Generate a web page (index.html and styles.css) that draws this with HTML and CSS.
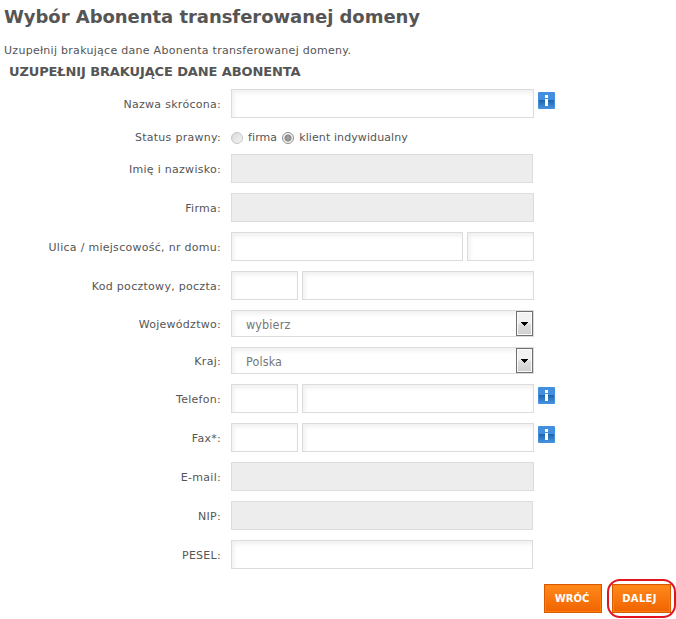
FILE: index.html
```html
<!DOCTYPE html>
<html lang="pl">
<head>
<meta charset="utf-8">
<title>Wybór Abonenta transferowanej domeny</title>
<link rel="stylesheet" href="styles.css">
</head>
<body>
<svg class="defs" width="0" height="0">
  <defs>
    <linearGradient id="blue" x1="0" y1="0" x2="0" y2="1"><stop offset="0" stop-color="#1f64a8"/><stop offset="1" stop-color="#4490df"/></linearGradient>
    <symbol id="info" viewBox="0 0 17 17">
      <rect width="17" height="17" rx="1" fill="#438fdf"/>
      <rect x="1" y="8" width="15" height="8" fill="url(#blue)"/>
      <path d="M7 3h3v3H7zM7 7h3v7H7z" fill="#fff"/>
    </symbol>
  </defs>
</svg>
<h1>Wybór Abonenta transferowanej domeny</h1>
<p class="intro">Uzupełnij brakujące dane Abonenta transferowanej domeny.</p>
<h2>UZUPEŁNIJ BRAKUJĄCE DANE ABONENTA</h2>
<form>
  <div class="row"><label>Nazwa skrócona:</label><input class="full"><svg class="info"><use href="#info"/></svg></div>
  <div class="row status"><label>Status prawny:</label><i class="radio"></i><span class="option">firma</span><i class="radio checked"></i><span class="option">klient indywidualny</span></div>
  <div class="row"><label>Imię i nazwisko:</label><input class="short" disabled></div>
  <div class="row"><label>Firma:</label><input class="full" disabled></div>
  <div class="row"><label>Ulica / miejscowość, nr domu:</label><input class="medium"><input class="small"></div>
  <div class="row"><label>Kod pocztowy, poczta:</label><input class="small"><input class="medium"></div>
  <div class="row pick"><label>Województwo:</label><div class="select"><span>wybierz</span><b><svg width="7" height="4"><path d="M0 0h7v1H6v1H5v1H4v1H3V3H2V2H1V1H0z"/></svg></b></div></div>
  <div class="row pick"><label>Kraj:</label><div class="select"><span>Polska</span><b><svg width="7" height="4"><path d="M0 0h7v1H6v1H5v1H4v1H3V3H2V2H1V1H0z"/></svg></b></div></div>
  <div class="row"><label>Telefon:</label><input class="small"><input class="medium"><svg class="info"><use href="#info"/></svg></div>
  <div class="row"><label>Fax*:</label><input class="small"><input class="medium"><svg class="info"><use href="#info"/></svg></div>
  <div class="row"><label>E-mail:</label><input class="full" disabled></div>
  <div class="row"><label>NIP:</label><input class="short" disabled></div>
  <div class="row"><label>PESEL:</label><input class="short"></div>
  <div class="actions"><button type="button">WRÓĆ</button><div class="ring"><button type="button">DALEJ</button></div></div>
</form>
</body>
</html>
```
FILE: styles.css
```css
* { box-sizing: border-box; }
body {
  margin: 0;
  width: 676px;
  height: 619px;
  overflow: hidden;
  background: #fff;
  color: #555;
  font: 11px/14px Verdana, "DejaVu Sans", sans-serif;
  letter-spacing: 0.28px;
}
.defs { display: block; }
h1 { margin: 0; padding: 5px 0 0 4px; height: 43px; font-size: 18px; line-height: 24px; letter-spacing: -0.04px; white-space: nowrap; }
.intro { margin: 0; padding: 1px 0 0 4px; height: 21px; }
h2 { margin: 0; padding: 0 0 0 9px; height: 25px; font-size: 13px; line-height: 15px; letter-spacing: -0.12px; white-space: nowrap; }
form { display: flex; flex-direction: column; gap: 10px; }
.row { display: flex; align-items: flex-start; height: 29px; }
.row label { width: 221px; margin-right: 10px; line-height: 32px; text-align: right; white-space: nowrap; }
input {
  height: 29px;
  margin: 0 4px 0 0;
  padding: 0 8px;
  border: 1px solid #dcdcdc;
  border-radius: 0;
  background: #fff;
  box-shadow: inset 2px 3px 4px #f0f0f0;
  outline: none;
}
input:disabled { background: #ededed; box-shadow: none; }
.full { width: 303px; }
.short { width: 302px; }
.medium { width: 232px; }
.small { width: 67px; }
.info { display: block; width: 17px; height: 17px; margin-top: 3px; }
.status { height: 16px; padding-top: 3px; align-items: center; }
.status label { line-height: 16px; }
.option { letter-spacing: 0.1px; }
.radio { width: 12px; height: 12px; margin-right: 5px; border: 1px solid #c5c5c5; border-radius: 50%; background: linear-gradient(135deg, #d9d9d9, #f5f5f5); }
.radio.checked { margin-left: 5px; border-color: #909090; background: radial-gradient(circle, #aaa 0, #888 3px, #f2f2f2 4px); }
.pick { height: 27px; }
.pick label { line-height: 30px; }
.select { display: flex; justify-content: space-between; width: 303px; height: 27px; border: 1px solid #dcdcdc; box-shadow: inset 2px 3px 4px #f0f0f0; color: #777; font: 12.5px/28px Tahoma, "DejaVu Sans Condensed", "DejaVu Sans", sans-serif; letter-spacing: 0.12px; }
.select span { padding-left: 14px; }
.select b { display: flex; align-items: center; justify-content: center; width: 17px; height: 25px; border: 1px solid #707070; background: linear-gradient(#f2f2f2 0 48%, #dedede 52%, #cfcfcf); box-shadow: inset 0 0 0 1px #fafafa; }
.actions { display: flex; justify-content: flex-end; align-items: center; gap: 5px; height: 39px; }
button { display: block; width: 58px; height: 29px; padding: 0 2px 0 0; border: 1px solid #d65b00; background: linear-gradient(#ff8a1c, #f16300); box-shadow: inset 0 0 0 1px #ff7e0c; color: #fff; font: bold 10px/27px Verdana, "DejaVu Sans", sans-serif; }
.ring { width: 69px; height: 39px; padding: 3px; border: 2px solid #e4141e; border-radius: 13px; }
.ring button { width: 59px; padding-right: 4px; letter-spacing: 0.3px; }
```
